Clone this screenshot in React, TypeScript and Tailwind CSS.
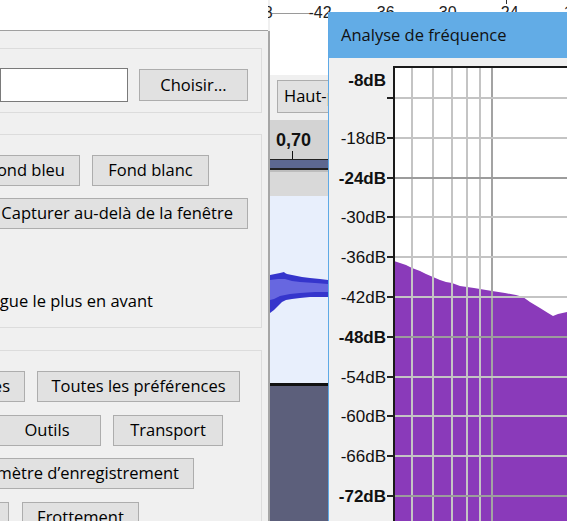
import React from "react";

const btn =
  "flex items-center h-[31px] shrink-0 whitespace-nowrap bg-[#e1e1e1] border border-[#adadad] text-[#000]";

const gridY = [40, 80, 120, 159, 199, 239, 279, 319, 358, 398, 438];
const gridLabels = [
  "",
  "-18dB",
  "-24dB",
  "-30dB",
  "-36dB",
  "-42dB",
  "-48dB",
  "-54dB",
  "-60dB",
  "-66dB",
  "-72dB",
];
const gridX = [83, 104, 123, 138, 151, 163];

const curve: [number, number][] = [
  [65, 203],
  [71, 205],
  [77, 207],
  [83, 210],
  [91, 213],
  [97, 216],
  [104, 219],
  [111, 222],
  [117, 224],
  [123, 225],
  [131, 228],
  [138, 229],
  [145, 230],
  [151, 231],
  [163, 233],
  [176, 235],
  [187, 237],
  [194, 239],
  [201, 244],
  [211, 250],
  [219, 255],
  [224, 258],
  [229, 256],
  [238, 254],
];

function FreqChart() {
  const pts =
    curve.map(([x, y]) => `${x},${y}`).join(" ") + " 238,463 65,463";
  return (
    <svg
      width="238"
      height="463"
      viewBox="0 0 238 463"
      className="absolute left-0 top-0"
    >
      <rect x="65" y="9" width="200" height="460" fill="#ffffff" />
      <polygon points={pts} fill="#8a3aba" />
      {gridX.map((x, i) => (
        <rect
          key={"v" + i}
          x={x - 1}
          y={10}
          width={2}
          height={460}
          fill={i === gridX.length - 1 ? "#a3a3a3" : "#c4c4c4"}
        />
      ))}
      {gridY.map((y, i) => (
        <rect
          key={"h" + i}
          x={66}
          y={y - 1}
          width={180}
          height={2}
          fill={i === 2 || i === 6 || i === 10 ? "#9c9c9c" : "#c4c4c4"}
        />
      ))}
      {gridY.map((y, i) => (
        <rect key={"t" + i} x={58} y={y - 1} width={7} height={2} fill="#222" />
      ))}
      <rect x="64" y="8" width="2" height="460" fill="#1a1a1a" />
      <rect x="64" y="8" width="180" height="2" fill="#1a1a1a" />
      <text
        x="57"
        y="28"
        textAnchor="end"
        fontFamily="'Liberation Sans', Arial, sans-serif"
        fontSize="17"
        fontWeight="bold"
        fill="#111"
      >
        -8dB
      </text>
      {gridY.map((y, i) =>
        gridLabels[i] ? (
          <text
            key={"l" + i}
            x="57"
            y={y + 6}
            textAnchor="end"
            fontFamily="'Liberation Sans', Arial, sans-serif"
            fontSize="17"
            fontWeight={i === 2 || i === 6 || i === 10 ? "bold" : "normal"}
            fill="#111"
          >
            {gridLabels[i]}
          </text>
        ) : null
      )}
    </svg>
  );
}

function Waveform() {
  const outerTop = [
    [0, 79],
    [5, 78],
    [10, 77],
    [14, 76],
    [15, 77],
    [17, 78],
    [22, 79],
    [27, 80],
    [32, 81],
    [40, 82],
    [50, 83],
    [58, 84],
  ];
  const outerBot = [
    [58, 101],
    [50, 101],
    [40, 101],
    [30, 102],
    [22, 103],
    [16, 104],
    [12, 106],
    [8, 110],
    [4, 114],
    [0, 117],
  ];
  const innerTop = [
    [0, 84],
    [8, 83],
    [15, 83],
    [22, 85],
    [30, 86],
    [45, 87],
    [58, 88],
  ];
  const innerBot = [
    [58, 96],
    [45, 96],
    [30, 97],
    [20, 98],
    [10, 100],
    [4, 103],
    [0, 104],
  ];
  const s = (a: number[][]) => a.map((p) => p.join(",")).join(" ");
  return (
    <svg width="58" height="187" viewBox="0 0 58 187" className="block">
      <polygon points={s(outerTop) + " " + s(outerBot)} fill="#3535cc" />
      <polygon points={s(innerTop) + " " + s(innerBot)} fill="#6767e0" />
    </svg>
  );
}

export default function App() {
  return (
    <div className="relative w-[567px] h-[521px] overflow-hidden bg-[#f0f0f0] font-['Open_Sans',sans-serif] text-[16.5px]">
      {/* Audacity main window behind */}
      <div className="absolute left-[270px] top-0 right-0 bottom-0 flex flex-col">
        <div className="relative h-[75px] shrink-0 bg-white">
          <div className="absolute left-[2px] top-[13px] w-[37px] h-px bg-[#9a9a9a]" />
          {[
            ["-48", -9],
            ["-42", 50],
            ["-36", 113],
            ["-30", 175],
            ["-24", 237],
            ["-18", 300],
          ].map(([t, c]) => (
            <div
              key={t as string}
              className="absolute top-[5px] leading-none -translate-x-1/2 font-['Liberation_Sans',Arial,sans-serif] text-[16px] text-[#222]"
              style={{ left: c as number }}
            >
              {t}
            </div>
          ))}
          <div className="absolute left-[236px] top-0 w-px h-[4px] bg-[#333]" />
        </div>
        <div className="h-[45px] shrink-0 bg-[#f0f0f0] pl-[7px] pt-[5px] flex items-start">
          <div className={btn + " w-[120px] h-[33px] pl-[6px]"}>Haut-parleurs</div>
        </div>
        <div className="relative h-[39px] shrink-0 bg-[#d3d3d3]">
          <div className="absolute left-[6px] top-[11px] leading-none font-bold font-['Liberation_Sans',Arial,sans-serif] text-[18px] text-[#111]">
            0,70
          </div>
          <div className="absolute left-[22px] top-[31px] w-px h-[8px] bg-[#111]" />
        </div>
        <div className="h-px shrink-0 bg-[#222]" />
        <div className="h-[8px] shrink-0 bg-[#5d6890]" />
        <div className="h-[2px] shrink-0 bg-[#222]" />
        <div className="h-[2px] shrink-0 bg-[#bdbdbd]" />
        <div className="h-[24px] shrink-0 bg-[#d9d9d9]" />
        <div className="h-[187px] shrink-0 bg-[#e8effc]">
          <Waveform />
        </div>
        <div className="h-[3px] shrink-0 bg-[#111]" />
        <div className="flex-1 bg-[#5c5f7b]" />
      </div>

      {/* Screenshot tools dialog */}
      <div className="absolute left-0 top-0 w-[270px] h-[521px] flex flex-col">
        <div className="h-[31px] w-[268px] shrink-0 bg-white border-b border-[#a0a0a0]" />
        <div className="flex-1 flex flex-col bg-[#f0f0f0] border-r-2 border-[#a6a6a6] pr-[6px]">
          {/* group 1 */}
          <div className="mt-[17px] h-[65px] -ml-px border border-[#dcdcdc] flex justify-end items-start gap-[11px] pt-[19px] pr-[13px]">
            <div className="w-[250px] h-[34px] bg-white border border-[#7a7a7a]" />
            <div className={btn + " mt-px w-[109px] h-[32px] justify-center"}>Choisir...</div>
          </div>
          {/* group 2 */}
          <div className="mt-[21px] h-[194px] -ml-px border border-[#dcdcdc] flex flex-col pt-[20px]">
            <div className="flex gap-[12px]">
              <div className={btn + " -ml-[21px] w-[101px] justify-end pr-[14px]"}>Fond bleu</div>
              <div className={btn + " w-[117px] justify-center"}>Fond blanc</div>
            </div>
            <div className="flex mt-[12px]">
              <div className={btn + " -ml-[20px] w-[268px] justify-end pr-[14px]"}>
                Capturer au-delà de la fenêtre
              </div>
            </div>
            <div className="flex mt-[61px]">
              <div className="-ml-[247px] w-[400px] shrink-0 text-right leading-[22px] whitespace-nowrap">
                Mettre la boîte de dialogue le plus en avant
              </div>
            </div>
          </div>
          {/* group 3 */}
          <div className="mt-[22px] flex-1 -ml-px border border-[#dcdcdc] border-b-0 flex flex-col pt-[20px]">
            <div className="flex gap-[12px]">
              <div className={btn + " -ml-[100px] w-[125px] justify-end pr-[14px]"}>Tous les scriptables</div>
              <div className={btn + " w-[203px] justify-center"}>Toutes les préférences</div>
            </div>
            <div className="flex gap-[12px] mt-[13px]">
              <div className={btn + " -ml-[7px] w-[108px] justify-center"}>Outils</div>
              <div className={btn + " w-[110px] justify-center"}>Transport</div>
            </div>
            <div className="flex mt-[12px]">
              <div className={btn + " -ml-[100px] w-[294px] justify-end pr-[14px]"}>
                Vumètre d’enregistrement
              </div>
            </div>
            <div className="flex gap-[13px] mt-[13px]">
              <div className={btn + " -ml-[100px] w-[109px] justify-end pr-[14px]"}>Périphérique</div>
              <div className={btn + " w-[117px] justify-center"}>Frottement</div>
            </div>
          </div>
        </div>
      </div>

      {/* Frequency analysis window */}
      <div className="absolute left-[328px] top-[12px] w-[260px] h-[520px] flex flex-col border-l border-[#5ea9e6]">
        <div className="h-[46px] shrink-0 bg-[#62ace6] flex items-center pl-[12px] text-[16.5px] text-[#111] whitespace-nowrap">
          Analyse de fréquence
        </div>
        <div className="relative flex-1 bg-[#f0f0f0]">
          <FreqChart />
        </div>
      </div>
    </div>
  );
}
